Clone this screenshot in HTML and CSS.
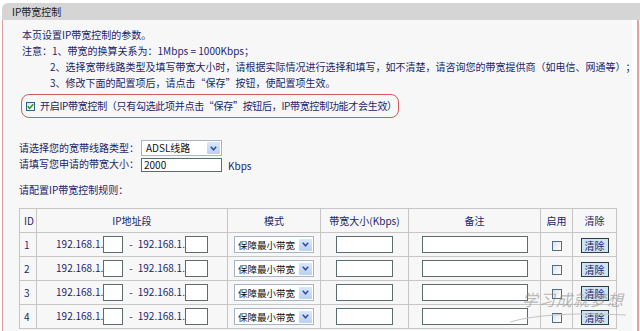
FILE: index.html
```html
<!DOCTYPE html>
<html lang="zh-CN">
<head>
<meta charset="utf-8">
<title>IP带宽控制</title>
<link rel="stylesheet" href="styles.css">
</head>
<body>
<div class="page">
  <div class="titlebar">IP带宽控制</div>
  <div class="main">
    <div class="content">
      <div class="intro">
        <p>本页设置IP带宽控制的参数。</p>
        <p>注意：1、带宽的换算关系为：1Mbps = 1000Kbps；</p>
        <p class="indent">2、选择宽带线路类型及填写带宽大小时，请根据实际情况进行选择和填写，如不清楚，请咨询您的带宽提供商（如电信、网通等）；</p>
        <p class="indent">3、修改下面的配置项后，请点击“保存”按钮，使配置项生效。</p>
      </div>
      <div class="enable-box">
        <span class="chk chk-on"><svg width="7" height="7" viewBox="0 0 7 7"><path d="M0.8 3.4 L2.7 5.4 L6.2 1.2" fill="none" stroke="#21a121" stroke-width="1.6"/></svg></span>
        <span class="enable-text">开启IP带宽控制（只有勾选此项并点击“保存”按钮后，IP带宽控制功能才会生效）</span>
      </div>
      <div class="form">
        <div class="form-row">
          <span class="label">请选择您的宽带线路类型：</span>
          <span class="select sel-line"><span class="sel-text">ADSL线路</span><span class="sel-arrow"><svg width="7" height="5" viewBox="0 0 7 5"><path d="M0.8 0.8 L3.5 3.8 L6.2 0.8" fill="none" stroke="#2b4fa0" stroke-width="1.5"/></svg></span></span>
        </div>
        <div class="form-row">
          <span class="label">请填写您申请的带宽大小：</span>
          <span class="field bw-total">2000</span>
          <span class="unit">Kbps</span>
        </div>
      </div>
      <p class="rules-title">请配置IP带宽控制规则：</p>
      <table class="rules">
        <colgroup>
          <col class="c-id"><col class="c-ip"><col class="c-mode"><col class="c-bw"><col class="c-note"><col class="c-on"><col class="c-clr">
        </colgroup>
        <thead>
          <tr><th class="id">ID</th><th>IP地址段</th><th>模式</th><th>带宽大小(Kbps)</th><th>备注</th><th>启用</th><th>清除</th></tr>
        </thead>
        <tbody>
          <tr>
            <td class="id">1</td>
            <td>192.168.1.<span class="field ip1"></span><span class="dash">-</span>192.168.1.<span class="field ip2"></span></td>
            <td><span class="select sel-mode"><span class="sel-text">保障最小带宽</span><span class="sel-arrow"><svg width="7" height="5" viewBox="0 0 7 5"><path d="M0.8 0.8 L3.5 3.8 L6.2 0.8" fill="none" stroke="#2b4fa0" stroke-width="1.5"/></svg></span></span></td>
            <td><span class="field bw"></span></td>
            <td><span class="field note"></span></td>
            <td><span class="chk"></span></td>
            <td><button class="btn" type="button">清除</button></td>
          </tr>
          <tr>
            <td class="id">2</td>
            <td>192.168.1.<span class="field ip1"></span><span class="dash">-</span>192.168.1.<span class="field ip2"></span></td>
            <td><span class="select sel-mode"><span class="sel-text">保障最小带宽</span><span class="sel-arrow"><svg width="7" height="5" viewBox="0 0 7 5"><path d="M0.8 0.8 L3.5 3.8 L6.2 0.8" fill="none" stroke="#2b4fa0" stroke-width="1.5"/></svg></span></span></td>
            <td><span class="field bw"></span></td>
            <td><span class="field note"></span></td>
            <td><span class="chk"></span></td>
            <td><button class="btn" type="button">清除</button></td>
          </tr>
          <tr>
            <td class="id">3</td>
            <td>192.168.1.<span class="field ip1"></span><span class="dash">-</span>192.168.1.<span class="field ip2"></span></td>
            <td><span class="select sel-mode"><span class="sel-text">保障最小带宽</span><span class="sel-arrow"><svg width="7" height="5" viewBox="0 0 7 5"><path d="M0.8 0.8 L3.5 3.8 L6.2 0.8" fill="none" stroke="#2b4fa0" stroke-width="1.5"/></svg></span></span></td>
            <td><span class="field bw"></span></td>
            <td><span class="field note"></span></td>
            <td><span class="chk"></span></td>
            <td><button class="btn" type="button">清除</button></td>
          </tr>
          <tr>
            <td class="id">4</td>
            <td>192.168.1.<span class="field ip1"></span><span class="dash">-</span>192.168.1.<span class="field ip2"></span></td>
            <td><span class="select sel-mode"><span class="sel-text">保障最小带宽</span><span class="sel-arrow"><svg width="7" height="5" viewBox="0 0 7 5"><path d="M0.8 0.8 L3.5 3.8 L6.2 0.8" fill="none" stroke="#2b4fa0" stroke-width="1.5"/></svg></span></span></td>
            <td><span class="field bw"></span></td>
            <td><span class="field note"></span></td>
            <td><span class="chk"></span></td>
            <td><button class="btn" type="button">清除</button></td>
          </tr>
        </tbody>
      </table>
    </div>
    <div class="gutter"></div>
    <div class="edge"></div>
  </div>
  <div class="watermark">学习成就梦想<svg class="wm-line" width="120" height="16" viewBox="0 0 120 16"><path d="M2 14 Q40 3 118 7" fill="none" stroke="#c4c4c4" stroke-width="1"/></svg></div>
</div>
</body>
</html>
```

FILE: styles.css
```css
* { box-sizing: border-box; }

body {
  margin: 0;
  background: #ffffff;
  font-family: "Noto Sans CJK SC", sans-serif;
  font-size: 10px;
  line-height: 16px;
  color: #1d1f6a;
  text-spacing-trim: space-all;
}

.page {
  position: relative;
  width: 640px;
  height: 331px;
  overflow: hidden;
}

.titlebar {
  margin: 3px 0 0 2px;
  height: 17px;
  line-height: 17px;
  padding-left: 10px;
  background: #d5d5d5;
  border-top-left-radius: 6px;
  color: #222222;
}

.main {
  display: flex;
  height: 311px;
}

.content {
  flex: none;
  width: 630px;
  margin-left: 2px;
  padding: 7px 0 0 16px;
  background: #f7f7f7;
  border-left: 1px solid #d99b9b;
  white-space: nowrap;
}

.gutter {
  flex: none;
  width: 5px;
  background: #ffffff;
}

.edge {
  flex: none;
  width: 2px;
  background: #e3a3a3;
}

.intro p {
  margin: 0;
  padding-left: 3px;
}

.intro p.indent {
  padding-left: 31px;
}

.enable-box {
  display: flex;
  align-items: center;
  width: 378px;
  height: 24px;
  margin: 3px 0 0 2px;
  padding-left: 4px;
  border: 1px solid #d35a5a;
  border-radius: 8px;
  gap: 5px;
}

.enable-text {
  letter-spacing: -0.3px;
}

.chk {
  display: inline-flex;
  align-items: center;
  justify-content: center;
  width: 10px;
  height: 10px;
  border: 1px solid #4d6d8a;
  background: linear-gradient(135deg, #e2e2e2, #ffffff);
  vertical-align: middle;
}

.chk-on {
  width: 9px;
  height: 9px;
  border-color: #2f5f8f;
}

.form {
  margin-top: 22px;
  display: flex;
  flex-direction: column;
}

.form-row {
  display: flex;
  align-items: center;
  height: 16px;
}

.label {
  width: 122px;
  flex: none;
}

.select {
  display: inline-flex;
  align-items: center;
  justify-content: space-between;
  height: 16px;
  padding: 1px;
  background: #ffffff;
  border: 1px solid #a5b6c8;
  vertical-align: middle;
  color: #111111;
}

.sel-text {
  padding-left: 3px;
  line-height: 12px;
}

.sel-arrow {
  flex: none;
  display: inline-flex;
  align-items: center;
  justify-content: center;
  width: 13px;
  height: 12px;
  background: linear-gradient(#dbe7fb, #b9cff3);
  border-radius: 1px;
}

.sel-line {
  width: 81px;
}

.sel-mode {
  width: 80px;
  height: 17px;
}

.sel-mode .sel-text {
  padding-left: 2px;
  font-size: 9.5px;
}

.field {
  display: inline-block;
  height: 16px;
  background: #ffffff;
  border: 1px solid #5a6c6c;
  vertical-align: middle;
  line-height: 14px;
  color: #111111;
  padding-left: 2px;
}

.bw-total {
  width: 81px;
  height: 14px;
  line-height: 12px;
  margin-top: 1px;
}

.unit {
  margin-left: 6px;
  margin-top: 4px;
}

.rules-title {
  margin: 10px 0 0 0;
}

.rules {
  margin-top: 10px;
  border-collapse: collapse;
  table-layout: fixed;
  width: 597px;
}

.c-id { width: 17px; }
.c-ip { width: 191px; }
.c-mode { width: 93px; }
.c-bw { width: 88px; }
.c-note { width: 132px; }
.c-on { width: 32px; }
.c-clr { width: 44px; }

.rules th,
.rules td {
  height: 24px;
  padding: 0;
  border: 1px solid #c6c6c6;
  text-align: center;
  vertical-align: middle;
  font-weight: normal;
}

.rules th.id,
.rules td.id {
  text-align: left;
  padding-left: 4px;
}

.dash {
  display: inline-block;
  margin: 0 5px 0 6px;
}

.ip1 { width: 20px; height: 17px; }
.ip2 { width: 23px; height: 17px; }
.bw { width: 57px; height: 17px; }
.note { width: 106px; height: 17px; }

.btn {
  height: 15px;
  width: 28px;
  padding: 0;
  font-family: "Noto Sans CJK SC", sans-serif;
  font-size: 10px;
  line-height: 13px;
  color: #1d1f6a;
  background: #cfe4f3;
  border: 1px solid #2d3a4a;
  vertical-align: middle;
}

.watermark {
  position: absolute;
  left: 522px;
  top: 290px;
  font-family: "DejaVu Serif", serif;
  font-style: italic;
  font-size: 16px;
  letter-spacing: 1px;
  color: rgba(140, 140, 140, 0.6);
  line-height: 22px;
}

.wm-line {
  position: absolute;
  left: -14px;
  top: 18px;
}
```
